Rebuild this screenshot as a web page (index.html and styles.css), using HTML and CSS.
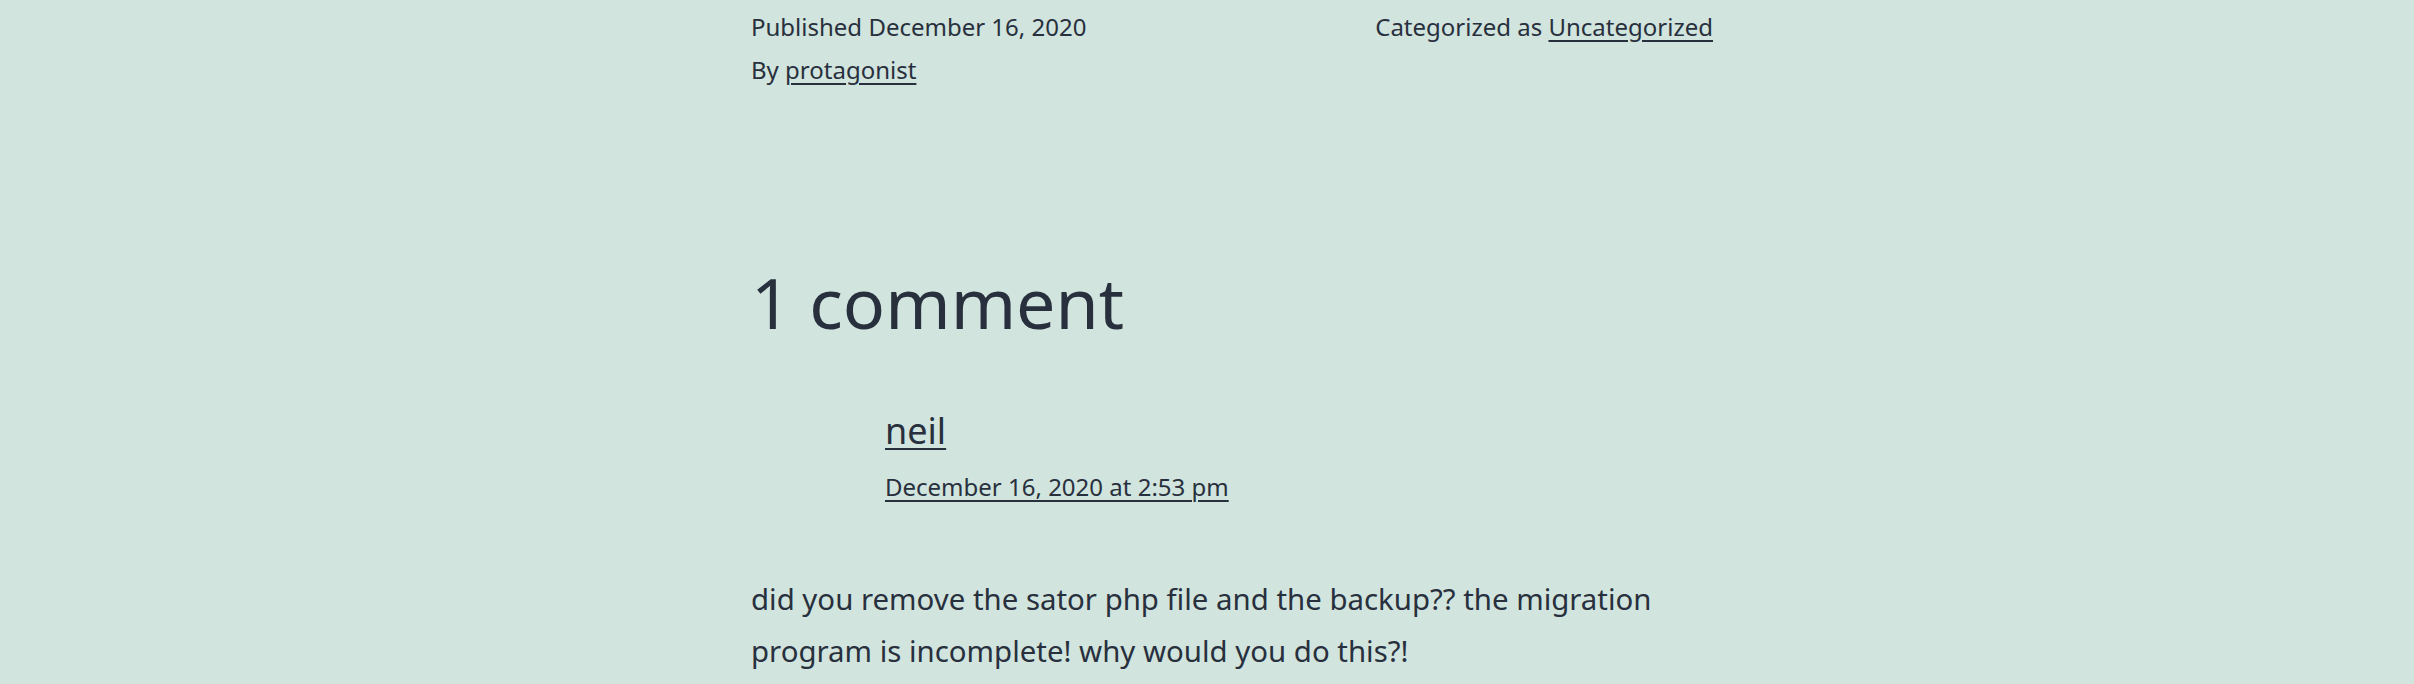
FILE: index.html
```html
<!DOCTYPE html>
<html lang="en">
<head>
<meta charset="utf-8">
<title>Post</title>
<link rel="stylesheet" href="styles.css">
</head>
<body>
<main class="site-main">
  <footer class="entry-footer">
    <div class="posted-by">
      <span class="posted-on">Published <time datetime="2020-12-16">December 16, 2020</time></span>
      <span class="byline">By <a href="#">protagonist</a></span>
    </div>
    <div class="post-taxonomies">
      <span class="cat-links">Categorized as <a href="#">Uncategorized</a></span>
    </div>
  </footer>
  <section class="comments-area">
    <h2 class="comments-title">1 comment</h2>
    <article class="comment">
      <div class="comment-meta">
        <div class="comment-author"><a href="#">neil</a></div>
        <div class="comment-metadata"><a href="#"><time>December 16, 2020 at 2:53 pm</time></a></div>
      </div>
      <div class="comment-content">
        <p>did you remove the sator php file and the backup?? the migration program is incomplete! why would you do this?!</p>
      </div>
    </article>
  </section>
</main>
</body>
</html>
```
FILE: styles.css
```css
html, body {
  margin: 0;
  padding: 0;
}
body {
  background: #d1e4dd;
  color: #28303d;
  font-family: "Noto Sans", "Open Sans", sans-serif;
  overflow: hidden;
}
a {
  color: #28303d;
  text-decoration: underline;
  text-decoration-thickness: 2px;
  text-underline-offset: 4px;
}
.site-main {
  width: 962px;
  margin-left: calc(50% - 456px);
}
.entry-footer {
  display: grid;
  grid-template-columns: 1fr 1fr;
  column-gap: 75px;
  font-size: 24px;
  line-height: 43px;
  padding-top: 5px;
}
.posted-on,
.byline {
  display: block;
}
.post-taxonomies {
  text-align: right;
}
.comments-area {
  padding-top: 166px;
}
.comments-title {
  margin: 0;
  font-size: 70px;
  font-weight: 400;
  line-height: 90px;
}
.comment-meta {
  padding-left: 134px;
  margin-top: 57px;
}
.comment-author {
  font-size: 36px;
  line-height: 54px;
}
.comment-metadata {
  font-size: 24px;
  line-height: 43px;
  margin-top: 7px;
}
.comment-content p {
  margin: 65px 0 0;
  font-size: 29.4px;
  line-height: 52px;
}
```
